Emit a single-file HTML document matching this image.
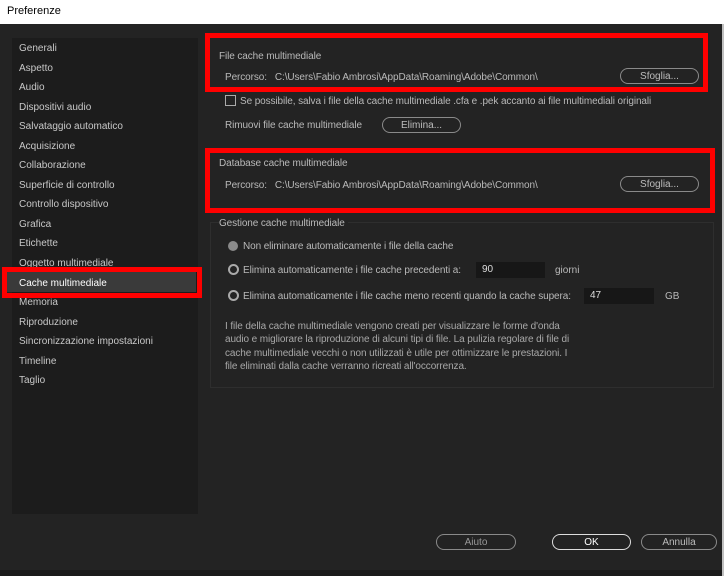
<!DOCTYPE html>
<html><head><style>
*{margin:0;padding:0;box-sizing:border-box}
body{width:724px;height:576px;background:#232323;font-family:"Liberation Sans",sans-serif;font-size:10px;color:#b9b9b9;position:relative;overflow:hidden}
.a{position:absolute;white-space:nowrap}
.title{left:0;top:0;width:724px;height:24px;background:#fff;color:#000;font-size:11px;padding:5px 7px}
.side{left:12px;top:38px;width:186px;height:476px;background:#1c1c1c}
.si{left:19px;color:#c8c8c8}
.red{position:absolute;border:5px solid #f00}
.btn{position:absolute;border:1px solid #8a8a8a;border-radius:8px;text-align:center;color:#bdbdbd;height:16px;line-height:16px}
.inp{position:absolute;background:#171717;color:#ddd;padding-left:6px;height:16px;line-height:16px}
.rad{position:absolute;width:11px;height:11px;border:2px solid #aaa;border-radius:50%}
.t{letter-spacing:-0.1px}
</style></head><body>
<div class="a title">Preferenze</div>
<div class="a side"></div>
<div class="a" style="left:722px;top:24px;width:2px;height:552px;background:#c0c0c0"></div>
<div class="a si" style="top:43px">Generali</div>
<div class="a si" style="top:63px">Aspetto</div>
<div class="a si" style="top:82px">Audio</div>
<div class="a si" style="top:102px">Dispositivi audio</div>
<div class="a si" style="top:121px">Salvataggio automatico</div>
<div class="a si" style="top:141px">Acquisizione</div>
<div class="a si" style="top:160px">Collaborazione</div>
<div class="a si" style="top:180px">Superficie di controllo</div>
<div class="a si" style="top:199px">Controllo dispositivo</div>
<div class="a si" style="top:219px">Grafica</div>
<div class="a si" style="top:238px">Etichette</div>
<div class="a si" style="top:258px">Oggetto multimediale</div>
<div class="a" style="left:7px;top:272px;width:189px;height:20px;background:#3a3a3a"></div>
<div class="a si" style="top:278px;color:#fff">Cache multimediale</div>
<div class="a si" style="top:297px">Memoria</div>
<div class="a si" style="top:317px">Riproduzione</div>
<div class="a si" style="top:336px">Sincronizzazione impostazioni</div>
<div class="a si" style="top:356px">Timeline</div>
<div class="a si" style="top:375px">Taglio</div>

<div class="a t" style="left:219px;top:51px">File cache multimediale</div>
<div class="a t" style="left:225px;top:72px">Percorso:&nbsp;&nbsp; C:\Users\Fabio Ambrosi\AppData\Roaming\Adobe\Common\</div>
<div class="btn" style="left:620px;top:68px;width:79px">Sfoglia...</div>
<div class="a" style="left:225px;top:95px;width:11px;height:11px;border:1px solid #aaa"></div>
<div class="a t" style="left:240px;top:96px">Se possibile, salva i file della cache multimediale .cfa e .pek accanto ai file multimediali originali</div>
<div class="a t" style="left:225px;top:120px">Rimuovi file cache multimediale</div>
<div class="btn" style="left:382px;top:117px;width:79px">Elimina...</div>

<div class="a t" style="left:219px;top:158px">Database cache multimediale</div>
<div class="a t" style="left:225px;top:180px">Percorso:&nbsp;&nbsp; C:\Users\Fabio Ambrosi\AppData\Roaming\Adobe\Common\</div>
<div class="btn" style="left:620px;top:176px;width:79px">Sfoglia...</div>

<div class="a" style="left:210px;top:222px;width:504px;height:166px;border:1px solid #2e2e2e"></div>
<div class="a t" style="left:219px;top:218px;background:#232323;padding-right:3px">Gestione cache multimediale</div>
<div class="a" style="left:228px;top:241px;width:10px;height:10px;border-radius:50%;background:#8a8a8a"></div>
<div class="a t" style="left:243px;top:241px">Non eliminare automaticamente i file della cache</div>
<div class="rad" style="left:228px;top:264px"></div>
<div class="a t" style="left:243px;top:265px">Elimina automaticamente i file cache precedenti a:</div>
<div class="inp" style="left:476px;top:262px;width:69px">90</div>
<div class="a" style="left:555px;top:265px">giorni</div>
<div class="rad" style="left:228px;top:290px"></div>
<div class="a t" style="left:243px;top:291px">Elimina automaticamente i file cache meno recenti quando la cache supera:</div>
<div class="inp" style="left:584px;top:288px;width:70px">47</div>
<div class="a" style="left:665px;top:291px">GB</div>
<div class="a t" style="left:225px;top:320px;line-height:13.3px;color:#a8a8a8">I file della cache multimediale vengono creati per visualizzare le forme d'onda<br>audio e migliorare la riproduzione di alcuni tipi di file. La pulizia regolare di file di<br>cache multimediale vecchi o non utilizzati è utile per ottimizzare le prestazioni. I<br>file eliminati dalla cache verranno ricreati all'occorrenza.</div>

<div class="btn" style="left:436px;top:534px;width:80px;color:#999">Aiuto</div>
<div class="btn" style="left:552px;top:534px;width:79px;border-color:#ddd;color:#fff">OK</div>
<div class="btn" style="left:641px;top:534px;width:76px">Annulla</div>
<div class="a" style="left:0;top:570px;width:722px;height:6px;background:#1a1a1a"></div>

<div class="red" style="left:205px;top:33px;width:503px;height:59px"></div>
<div class="red" style="left:205px;top:148px;width:510px;height:65px"></div>
<div class="red" style="left:2px;top:267px;width:200px;height:31px"></div>
</body></html>
